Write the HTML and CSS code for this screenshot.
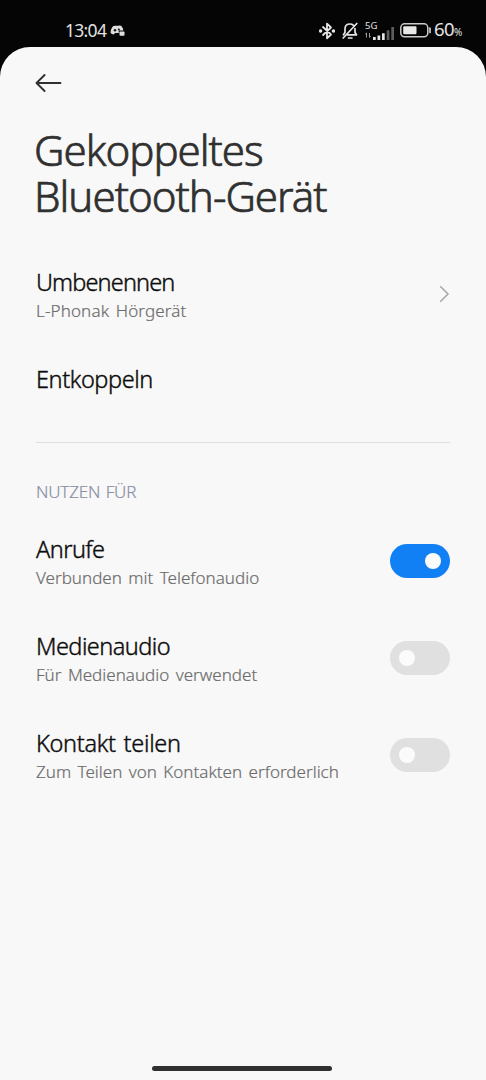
FILE: index.html
```html
<!DOCTYPE html>
<html lang="de">
<head>
<meta charset="utf-8">
<title>Gekoppeltes Bluetooth-Gerät</title>
<link rel="stylesheet" href="styles.css">
</head>
<body>
<div class="phone">
  <header class="status">
    <span class="clock">13:04</span>
    <svg class="discord" width="15" height="12" viewBox="0 0 15 12">
      <path fill="#dedede" d="M3 1.2C4 .6 5 .5 5.600.8h3.200c1-.4 2-.1 2.800.5 1 1.200 1.600 2.600 1.800 4.200H8.800V8H5L3.800 9.500C2.500 9.400 1.300 8.900.6 8 .5 5.500 1.300 3 3 1.200z"/>
      <circle cx="5" cy="5.200" r="1.200" fill="#111"/><circle cx="8.800" cy="4.500" r="1" fill="#111"/>
      <rect x="9.500" y="6.400" width="5" height="4.400" rx=".8" fill="#dedede"/>
    </svg>
    <span class="grow"></span>
    <svg class="bt" width="16" height="18" viewBox="0 0 16 18" fill="none" stroke="#e6e6e6" stroke-width="1.800" stroke-linejoin="round" stroke-linecap="round">
      <path d="M4 5l8 7.500-4 3.800V1.700l4 3.800L4 13"/>
      <circle cx="1.600" cy="9" r=".8" fill="#e6e6e6"/><circle cx="14.400" cy="9" r=".8" fill="#e6e6e6"/>
    </svg>
    <svg class="bell" width="16" height="18" viewBox="0 0 16 18" fill="none" stroke="#e6e6e6" stroke-width="1.700" stroke-linecap="round" stroke-linejoin="round">
      <path d="M1.500 12.800L3 10.500V7C3 4 5 2 8 2c1.300 0 2.400.4 3.200 1.200M13 6.500v4l1.500 2.300H5.500M6.500 16h3.400M14.800 1.500L1.200 16"/>
    </svg>
    <span class="cell">
      <span class="net">5G</span>
      <svg width="30" height="14" viewBox="0 0 30 14">
        <path d="M1.500 6v4.500M.3 7.200L1.500 6M4.500 6v4.500M5.700 9.300L4.500 10.500" stroke="#9a9a9a" fill="none"/>
        <path fill="#e6e6e6" d="M8 10h2.700v3H8zM12.500 8.500h2.700V13h-2.700zM17 6.200h2.700V13H17z"/>
        <path fill="#5c5c5c" d="M21.700 3.200h2.700V13h-2.700zM26.300 0H29v13h-2.700z"/>
      </svg>
    </span>
    <svg class="battery" width="32" height="15" viewBox="0 0 32 15">
      <rect x=".8" y=".8" width="27" height="13" rx="3.800" fill="none" stroke="#c9cbc8" stroke-width="1.500"/>
      <rect x="3.200" y="3.300" width="13.300" height="8" rx="1.200" fill="#e8e8e6"/>
      <path d="M30 5.200v4.200" stroke="#c9cbc8" stroke-width="1.700" stroke-linecap="round"/>
    </svg>
    <span class="percent">60<small>%</small></span>
  </header>
  <main class="sheet">
    <svg class="back" width="27" height="20" viewBox="0 0 27 20" fill="none" stroke="#303030" stroke-width="1.900" stroke-linecap="round" stroke-linejoin="round">
      <path d="M9.600 2L1.500 10l8.100 8M1.500 10h24"/>
    </svg>
    <h1 class="title">Gekoppeltes<br>Bluetooth-Gerät</h1>
    <section class="list">
      <div class="row">
        <div><div class="label l-rename">Umbenennen</div><div class="sub s-rename">L-Phonak Hörgerät</div></div>
        <svg class="chevron" width="11" height="18" viewBox="0 0 11 18" fill="none" stroke="#a6a6a6" stroke-width="1.500"><path d="M1.200 1.200L9 9l-7.800 7.800"/></svg>
      </div>
      <div class="row single"><div class="label l-unpair">Entkoppeln</div></div>
    </section>
    <hr class="divider">
    <h2 class="section">NUTZEN FÜR</h2>
    <section class="list">
      <div class="row">
        <div><div class="label l-calls">Anrufe</div><div class="sub">Verbunden mit Telefonaudio</div></div>
        <span class="switch on"></span>
      </div>
      <div class="row">
        <div><div class="label l-media">Medienaudio</div><div class="sub">Für Medienaudio verwendet</div></div>
        <span class="switch"></span>
      </div>
      <div class="row">
        <div><div class="label l-contact">Kontakt teilen</div><div class="sub">Zum Teilen von Kontakten erforderlich</div></div>
        <span class="switch"></span>
      </div>
    </section>
    <div class="home"></div>
  </main>
</div>
</body>
</html>
```
FILE: styles.css
```css
* { box-sizing: border-box; }
body { margin: 0; background: #050505; font-family: "Noto Sans", "Open Sans", sans-serif; }
svg { display: block; flex: none; }
.phone { width: 486px; height: 1080px; display: flex; flex-direction: column; background: #050505; overflow: hidden; }
.status { height: 47px; flex: none; display: flex; align-items: center; padding: 14px 0 0 65px; color: #e2e2e2; white-space: nowrap; }
.clock { font-size: 17.500px; line-height: 20px; width: 45px; padding-bottom: 1px; margin-top: -1px; letter-spacing: -0.700px; }
.grow { flex: 1; }
.bell { margin-left: 7px; }
.cell { width: 30px; height: 22px; margin: 0 5px 0 7px; display: flex; flex-direction: column; }
.cell svg { margin-top: -4px; }
.net { font-size: 9.500px; line-height: 11px; }
.percent { width: 54px; padding-left: 2px; font-size: 18.500px; line-height: 20px; letter-spacing: -0.600px; }
.percent small { font-size: 10px; }
.sheet { flex: 1; display: flex; flex-direction: column; background: #f8f8f8; border-radius: 30px 30px 0 0; padding: 26px 36px 0; }
.back { margin-left: -1px; }
.title { margin: 34px 0 0 -2px; font-size: 42px; line-height: 46px; font-weight: 300; letter-spacing: -0.980px; -webkit-text-stroke: 0.700px #303030; color: #303030; white-space: nowrap; }
.list { display: flex; flex-direction: column; }
.title + .list { margin-top: 27px; }
.row { height: 96.800px; display: flex; align-items: center; justify-content: space-between; white-space: nowrap; }
.row > div { padding-top: 2px; }
.single { height: 73px; }
.row.single > div { padding-top: 0; }
.label { font-size: 23.500px; line-height: 31px; font-weight: 300; letter-spacing: -0.550px; color: #0c0c0c; -webkit-text-stroke: 0.400px #0c0c0c; }
.l-rename { letter-spacing: -0.850px; }
.l-unpair { letter-spacing: -0.420px; }
.l-contact { letter-spacing: -0.300px; word-spacing: 2px; }
.sub { font-size: 17px; line-height: 25px; font-weight: 300; letter-spacing: 0.010px; word-spacing: 2px; color: #6c6c6c; -webkit-text-stroke: 0.200px #6c6c6c; }
.s-rename { letter-spacing: 0.140px; }
.divider { width: 100%; height: 1px; border: 0; margin: 26px 0 0; background: #dedede; flex: none; }
.section { margin: 37px 0 9px; font-size: 17px; line-height: 24px; font-weight: 300; letter-spacing: -0.150px; word-spacing: 1px; color: #8990a3; -webkit-text-stroke: 0.200px #8990a3; }
.switch { width: 60px; height: 34px; flex: none; display: flex; align-items: center; padding: 0 9px; border-radius: 17px; background: #e0e0e0; }
.switch::before { content: ""; width: 16px; height: 16px; border-radius: 50%; background: #fbfbfb; }
.switch.on { justify-content: flex-end; background: #1280f5; }
.home { width: 180px; height: 5px; margin: auto 0 9px 115.500px; border-radius: 3px; background: #303030; }
```
